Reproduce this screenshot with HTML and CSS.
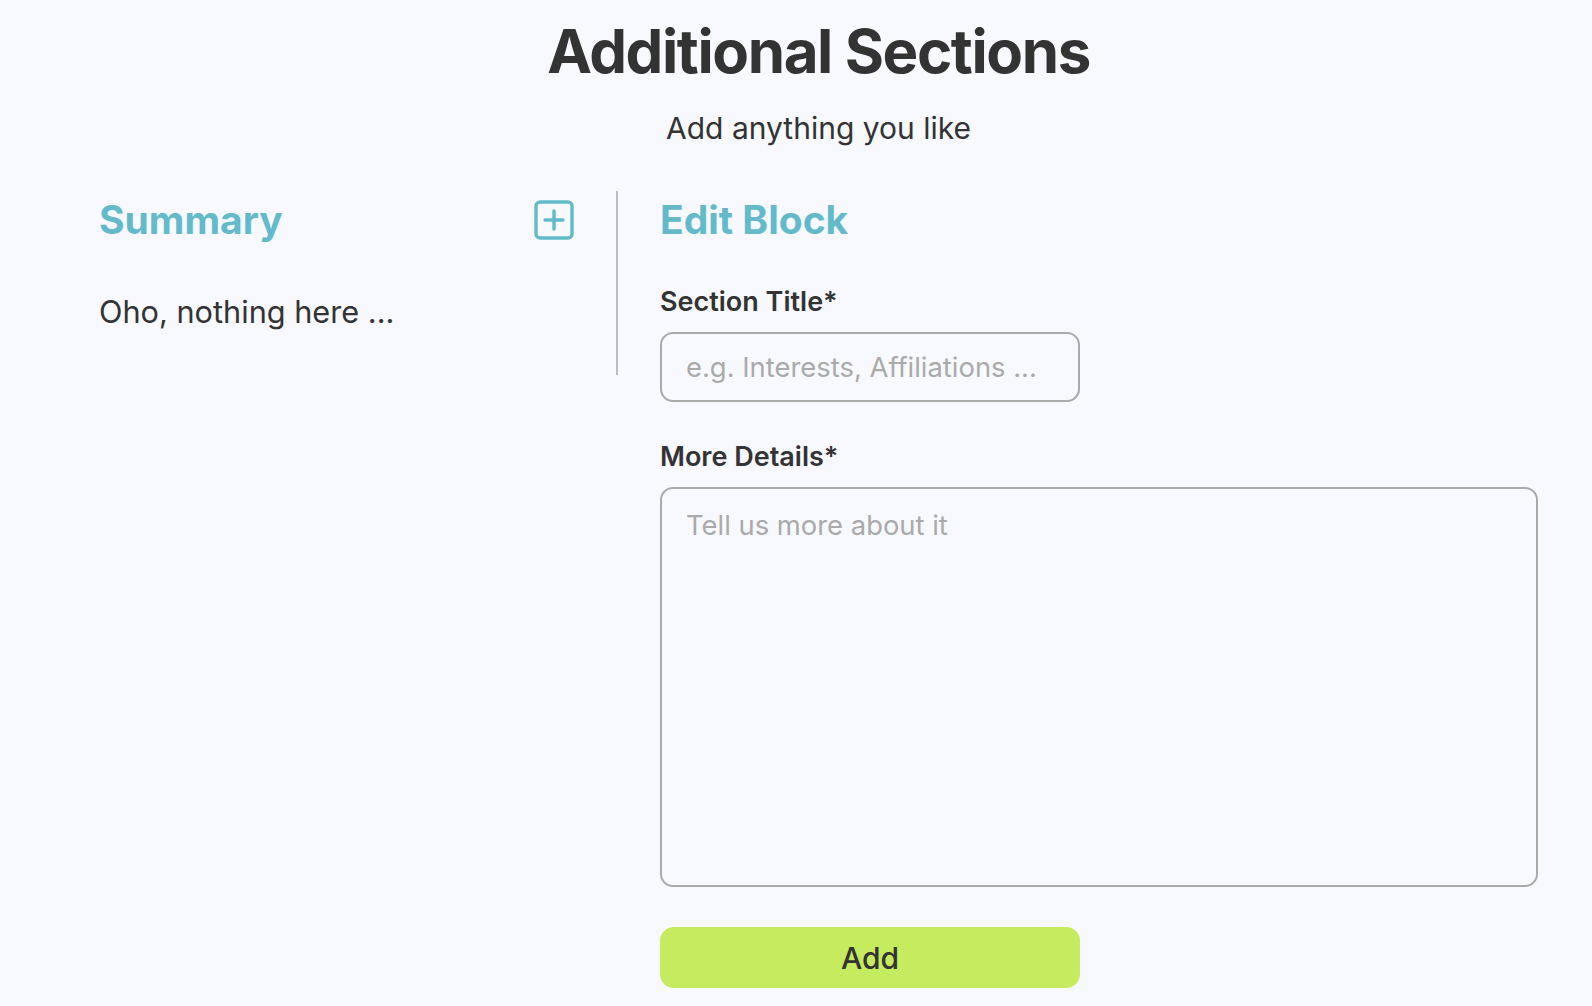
FILE: index.html
```html
<!DOCTYPE html>
<html lang="en">
<head>
<meta charset="utf-8">
<title>Additional Sections</title>
<link rel="stylesheet" href="styles.css">
</head>
<body>
<main class="page">
  <header class="intro">
    <h1 class="title">Additional Sections</h1>
    <p class="subtitle">Add anything you like</p>
  </header>
  <div class="columns">
    <section class="summary">
      <div class="head-row">
        <h2 class="heading">Summary</h2>
        <button class="icon-btn" type="button" aria-label="Add section">
          <svg width="40" height="40" viewBox="0 0 40 40" fill="none" stroke="#62bacb" stroke-width="3.4" stroke-linecap="round">
            <rect x="2" y="2" width="36" height="36" rx="4"/>
            <path d="M20 11v18M11 20h18"/>
          </svg>
        </button>
      </div>
      <p class="empty">Oho, nothing here ...</p>
    </section>
    <section class="editor">
      <div class="head-row">
        <h2 class="heading">Edit Block</h2>
      </div>
      <label class="label" for="title">Section Title*</label>
      <input class="field" id="title" type="text" placeholder="e.g. Interests, Affiliations ...">
      <label class="label label-gap" for="details">More Details*</label>
      <textarea class="area" id="details" placeholder="Tell us more about it"></textarea>
      <button class="add-btn" type="button">Add</button>
    </section>
  </div>
</main>
</body>
</html>
```

FILE: styles.css
```css
* { box-sizing: border-box; }
html, body { margin: 0; padding: 0; }
body {
  background: #f8f9fe;
  color: #333333;
  font-family: Inter, "Noto Sans", sans-serif;
  overflow: hidden;
}
.page {
  padding: 15px 54px 0 99px;
}
.intro {
  text-align: center;
}
.title {
  margin: 0;
  font-size: 60px;
  line-height: 72px;
  font-weight: 700;
  letter-spacing: -1.4px;
  color: #333333;
}
.subtitle {
  margin: 23px 0 0;
  font-size: 30px;
  line-height: 36px;
  font-weight: 400;
}
.columns {
  display: grid;
  grid-template-columns: 519px 1fr;
  align-items: start;
  margin-top: 45px;
}
.summary {
  border-right: 2px solid #bdbdbd;
  padding: 0 42px 45px 0;
}
.head-row {
  height: 58px;
  display: flex;
  align-items: center;
  justify-content: space-between;
}
.heading {
  margin: 0;
  font-size: 39px;
  line-height: 46px;
  font-weight: 700;
  color: #62bacb;
}
.icon-btn {
  border: 0;
  background: none;
  padding: 0;
  width: 40px;
  height: 40px;
  display: flex;
  cursor: pointer;
}
.empty {
  margin: 45px 0 0;
  font-size: 30.7px;
  line-height: 36px;
}
.editor {
  padding-left: 42px;
  display: flex;
  flex-direction: column;
  align-items: flex-start;
}
.label {
  margin-top: 37px;
  font-size: 27px;
  line-height: 32px;
  font-weight: 600;
}
.label-gap { margin-top: 39px; }
.field, .area {
  font-family: inherit;
  font-size: 27.4px;
  color: #333;
  background: transparent;
  border: 2px solid #aaaaaa;
  border-radius: 13px;
  outline: none;
}
.field::placeholder, .area::placeholder { color: #aaaaaa; }
.field {
  margin-top: 14px;
  width: 420px;
  height: 70px;
  padding: 0 24px;
}
.area {
  margin-top: 14px;
  width: 100%;
  height: 400px;
  padding: 19px 24px;
  resize: none;
  line-height: 34px;
}
.add-btn {
  margin-top: 40px;
  width: 420px;
  height: 61px;
  border: 0;
  border-radius: 14px;
  background: #c5eb5f;
  color: #333333;
  font-family: inherit;
  font-size: 30px;
  font-weight: 500;
  cursor: pointer;
}
```
